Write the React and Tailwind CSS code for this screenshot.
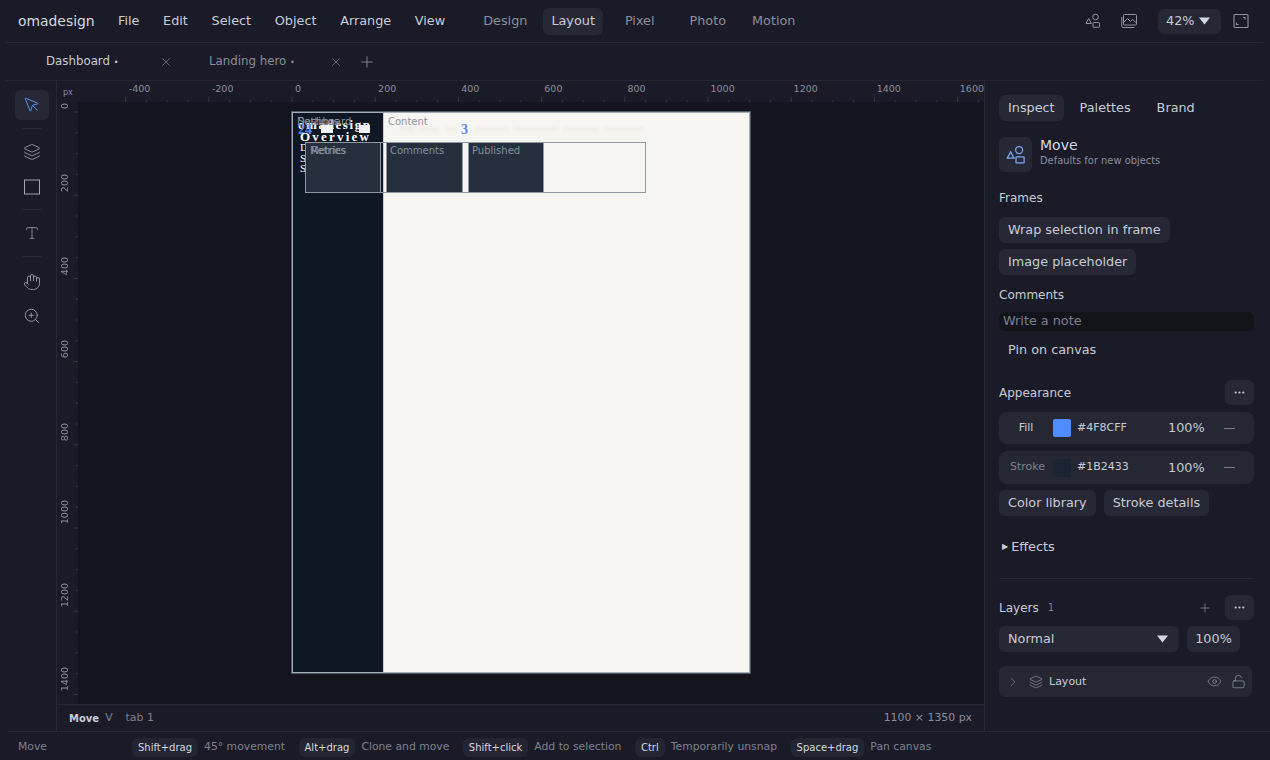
import React from 'react';
import { MousePointer, Layers, Type, Hand, ZoomIn, X, Plus, Ellipsis, ChevronRight, Eye, LockOpen } from 'lucide-react';

const menus = ['File', 'Edit', 'Select', 'Object', 'Arrange', 'View'];
const hints = [
  ['Shift+drag', '45° movement'],
  ['Alt+drag', 'Clone and move'],
  ['Shift+click', 'Add to selection'],
  ['Ctrl', 'Temporarily unsnap'],
  ['Space+drag', 'Pan canvas'],
];
const hLabels = [-400, -200, 0, 200, 400, 600, 800, 1000, 1200, 1400, 1600];
const vLabels = [0, 200, 400, 600, 800, 1000, 1200, 1400];
const cards = [
  { label: 'Comments', cls: 'w-[77px] ml-[5px]' },
  { label: 'Published', cls: 'w-[76px] ml-[5px]' },
];
const smudges = [
  'left-[107px] w-[15px]', 'left-[126px] w-[20px]', 'left-[152px] w-[12px]',
  'left-[182px] w-[34px]', 'left-[221px] w-[44px]', 'left-[270px] w-[36px]', 'left-[311px] w-[40px]',
];

const Caret = ({ className }) => (
  <svg width="11" height="8" viewBox="0 0 11 8" className={className}><path d="M0 0.5h11L5.5 7.5z" fill="currentColor" /></svg>
);

const Corner = () => (
  <svg width="16" height="16" viewBox="0 0 16 16" fill="none" stroke="#8f93a3" strokeWidth="1.1">
    <rect x="1" y="1.5" width="14" height="13" rx="1" />
    <path d="M10 4.5h2v2M3.5 9.5v2h2" />
  </svg>
);

// triangle, circle and box, used in the top bar and the Move header
const ShapesIcon = ({ size, color }) => (
  <svg width={size} height={size} viewBox="0 0 16 16" fill="none" stroke={color} strokeWidth="1">
    <path d="M3.7 5.5 6.4 10.5H1z" />
    <circle cx="10.5" cy="4" r="2.8" />
    <rect x="8" y="9.5" width="6.5" height="4.8" rx="0.6" />
  </svg>
);

const ImagesIcon = () => (
  <svg width="16" height="16" viewBox="0 0 16 16" fill="none" stroke="#8f93a3" strokeWidth="1">
    <rect x="2.5" y="1.5" width="13" height="10.5" rx="1" />
    <path d="M2.5 9.5 6.5 5.5 9.5 8.5 11.5 6.5 15.5 10M.8 4v9.5a1 1 0 0 0 1 1h11.5" />
  </svg>
);

function Chip({ children }) {
  return <button className="h-[26px] px-[9px] rounded-md bg-[#262835] text-[12.8px] text-[#c9ccd8] whitespace-nowrap">{children}</button>;
}

function ColorRow({ label, swatch, hex, dim, h }) {
  return (
    <div className={`flex items-center rounded-lg bg-[#252733] ${h}`}>
      <span className={`w-[54px] text-center ${dim ? 'text-[11px] text-[#7d8090] pl-[3px]' : 'text-[11px] text-[#c9ccd8]'}`}>{label}</span>
      <span className={`w-[18px] h-[18px] rounded-[2px] ${swatch}`} />
      <span className="ml-[6px] w-[91px] text-[11px] text-[#c9ccd8]">{hex}</span>
      <span className="w-[44px] text-[12.8px] text-[#c9ccd8]">100%</span>
      <span className="ml-[12px] w-[11px] h-px bg-[#7d8090]" />
    </div>
  );
}

function Rulers() {
  return (
    <>
      <div className="absolute left-0 top-0 right-0 h-[21px] overflow-hidden">
        <span className="absolute left-[6px] top-[6px] text-[8px] text-[#8a8d9c]">px</span>
        <svg className="absolute left-0 top-0" width="928" height="21">
          {Array.from({ length: 50 }, (_, i) => {
            const x = 235 - 8 * 20.8 + i * 20.8;
            return <line key={i} x1={x} x2={x} y1={i % 4 === 0 ? 16 : 19} y2="21" stroke="#33353f" strokeWidth="1" />;
          })}
        </svg>
        {hLabels.map(v => (
          <span key={v} className="absolute top-[1px] text-[9.5px] text-[#8a8d9c]" style={{ left: 235 + (v / 200) * 83.1 + 3 }}>{v}</span>
        ))}
      </div>
      <div className="absolute left-0 top-[21px] bottom-[27px] w-[21px] overflow-hidden">
        <svg className="absolute left-0 top-0" width="21" height="602">
          {Array.from({ length: 30 }, (_, i) => {
            const y = 10 + i * 20.8;
            return <line key={i} x1={i % 4 === 0 ? 16 : 19} x2="21" y1={y} y2={y} stroke="#33353f" strokeWidth="1" />;
          })}
        </svg>
        {vLabels.map(v => (
          <span key={v} className="absolute left-[2px] text-[9.5px] leading-[12px] text-[#8a8d9c] [writing-mode:vertical-rl] rotate-180" style={{ bottom: 602 - (10 + (v / 200) * 83.1) + 3 }}>{v}</span>
        ))}
      </div>
    </>
  );
}

function Artboard() {
  return (
    <div className="absolute left-[235px] top-[31px] w-[458px] h-[561px] border border-[#a3adb7] shadow-[0_0_0_1px_#4f5963] bg-[#f7f5f1] overflow-hidden">
      <div className="absolute left-0 top-0 w-[91px] h-full bg-[#0e1723] border-r border-[#c9ccd0]" />
      <span className="absolute left-[5px] top-[5px] w-[85px] overflow-hidden text-[13px] leading-[14px] font-bold text-white font-['Liberation_Serif',serif] tracking-[1.6px] whitespace-nowrap">omadesign</span>
      <span className="absolute left-[4px] top-[1px] text-[10px] text-[#8b93a3]">Dashboard</span>
      <span className="absolute left-[5px] top-[1px] text-[10px] text-[#8b93a3]">Settings</span>
      <span className="absolute left-[5px] top-[10px] text-[14px] leading-[14px] font-bold text-[#4f8cff] font-['Liberation_Serif',serif]">24</span>
      <span className="absolute left-[28px] top-[12px] w-[12px] h-[8px] bg-[#eef0f2]" />
      <span className="absolute left-[66px] top-[12px] w-[11px] h-[8px] bg-[#eef0f2]" />
      <span className="absolute left-[7px] top-[17px] text-[13px] leading-[14px] font-bold text-white font-['Liberation_Serif',serif] tracking-[2.2px]">Overview</span>
      <span className="absolute left-[7px] top-[27px] text-[11px] leading-[14px] text-white font-['Liberation_Serif',serif]">D</span>
      <span className="absolute left-[7px] top-[38px] text-[11px] leading-[14px] text-white font-['Liberation_Serif',serif]">S</span>
      <span className="absolute left-[7px] top-[48px] text-[11px] leading-[14px] text-white font-['Liberation_Serif',serif]">S</span>
      <span className="absolute left-[95px] top-[1px] text-[10px] text-[#8f94a0]">Content</span>
      {smudges.map(s => <div key={s} className={`absolute top-[14px] h-[4px] bg-[#f0eeea] blur-[1px] ${s}`} />)}
      <span className="absolute left-[168px] top-[10px] text-[14px] leading-[14px] font-bold text-[#4f8cff] font-['Liberation_Serif',serif]">3</span>
      <div className="absolute left-[12px] top-[29px] w-[341px] h-[51px] border border-[#8e99a6] flex">
        <div className="relative h-full w-[75px] bg-[#252f3e] border-r border-[#8e99a6] text-[10px] leading-[16px] text-[#87909c]">
          <span className="absolute left-[4px]">Metrics</span>
          <span className="absolute left-[5px]">Retries</span>
        </div>
        {cards.map(c => (
          <div key={c.label} className={`h-full bg-[#252f3e] border-x border-[#8e99a6] pl-[3px] text-[10px] leading-[16px] text-[#87909c] ${c.cls}`}>{c.label}</div>
        ))}
      </div>
    </div>
  );
}

export default function App() {
  return (
    <div className="w-[1270px] h-[760px] overflow-hidden flex flex-col bg-[#1a1b27] text-[#c9ccd8] font-['DejaVu_Sans',sans-serif]">
      <header className="h-[43px] shrink-0 flex items-center ml-[6px] mr-[7px] pl-[12px] pr-[14px] border-b border-[#262835]">
        <span className="text-[13.9px] text-[#d5d8e3] w-[100px]">omadesign</span>
        <nav className="flex gap-[23.7px] text-[12.8px] text-[#c9ccd8]">
          {menus.map(m => <span key={m}>{m}</span>)}
        </nav>
        <div className="ml-[30px] flex items-center text-[12.8px] text-[#8a8d9c]">
          <span className="px-2">Design</span>
          <span className="ml-2 h-[27px] px-2 flex items-center rounded-md bg-[#262835] text-[#c9ccd8]">Layout</span>
          <span className="ml-[14px] px-2">Pixel</span>
          <span className="ml-[19px] px-2">Photo</span>
          <span className="ml-[10px] px-2">Motion</span>
        </div>
        <div className="ml-auto flex items-center">
          <ShapesIcon size={16} color="#8f93a3" />
          <span className="ml-[20px]"><ImagesIcon /></span>
          <div className="ml-[21px] w-[63px] h-[25px] rounded-md bg-[#262835] flex items-center pl-[8px] gap-[5px] text-[12.8px]">42%<Caret className="text-[#d5d8e3]" /></div>
          <span className="ml-[12px]"><Corner /></span>
        </div>
      </header>

      <div className="h-[38px] shrink-0 flex items-center ml-[6px] mr-[7px] pl-[40px] border-b border-[#232530] text-[11.8px]">
        <span className="w-[113px] text-[#c9ccd8]">Dashboard <span className="text-[8px]">•</span></span>
        <X size={14} strokeWidth={1} className="text-[#9a9dac]" />
        <span className="ml-[36px] w-[120px] text-[#8a8d9c]">Landing hero <span className="text-[8px]">•</span></span>
        <X size={14} strokeWidth={1} className="text-[#9a9dac]" />
        <Plus size={18} strokeWidth={1} className="ml-[15px] text-[#9a9dac]" />
      </div>

      <div className="flex-1 flex min-h-0">
        <aside className="w-[57px] shrink-0 flex flex-col items-center pt-[9px] pl-[7px] border-r border-[#262835] text-[#a3a6b4]">
          <div className="w-[34px] h-[30px] shrink-0 rounded-md bg-[#262835] flex items-center justify-center">
            <MousePointer size={18} strokeWidth={1.3} className="text-[#5b93f0]" />
          </div>
          <span className="mt-[8px] w-[18px] h-px bg-[#2b2d3a]" />
          <Layers size={18} strokeWidth={1.1} className="mt-[14px]" />
          <svg width="18" height="16" viewBox="0 0 18 16" fill="none" stroke="currentColor" strokeWidth="1" className="mt-[18px]"><rect x="1.5" y="1" width="15" height="14" /></svg>
          <span className="mt-[14px] w-[18px] h-px bg-[#2b2d3a]" />
          <Type size={16} strokeWidth={1.1} className="mt-[15px]" />
          <span className="mt-[15px] w-[18px] h-px bg-[#2b2d3a]" />
          <Hand size={18} strokeWidth={1.1} className="mt-[16px]" />
          <ZoomIn size={18} strokeWidth={1.1} className="mt-[16px]" />
        </aside>

        <main className="relative w-[928px] shrink-0 bg-[#13141d] border-r border-[#262835]">
          <div className="absolute left-0 right-0 top-0 h-[21px] bg-[#1a1b27]" />
          <div className="absolute left-0 top-0 bottom-0 w-[21px] bg-[#1a1b27]" />
          <Rulers />
          <Artboard />
          <div className="absolute left-0 right-0 bottom-0 h-[27px] bg-[#1a1b27] border-t border-[#262835] flex items-center px-[12px] text-[10.9px]">
            <span className="font-bold text-[10px] text-[#c9ccd8]">Move</span>
            <span className="ml-[6px] text-[#7d8090]">V</span>
            <span className="ml-[13px] text-[#7d8090]">tab 1</span>
            <span className="ml-auto text-[#8a8d9c]">1100 × 1350 px</span>
          </div>
        </main>

        <aside className="flex-1 pl-[14px] pr-[16px] pt-[14px] min-w-0">
          <div className="flex items-center text-[12.8px] h-[26px]">
            <span className="h-[26px] px-[9px] flex items-center rounded-md bg-[#262835]">Inspect</span>
            <span className="ml-[16px]">Palettes</span>
            <span className="ml-[26px]">Brand</span>
          </div>
          <div className="mt-[16px] flex items-center h-[35px]">
            <div className="w-[33px] h-[35px] rounded-md bg-[#262835] flex items-center justify-center">
              <ShapesIcon size={20} color="#7ea6f0" />
            </div>
            <div className="ml-[8px] -mt-[4px]">
              <div className="text-[14px] leading-[16px] text-[#d5d8e3]">Move</div>
              <div className="text-[9.9px] leading-[15px] text-[#8a8d9c]">Defaults for new objects</div>
            </div>
          </div>

          <div className="mt-[18px] text-[12px] leading-[16px]">Frames</div>
          <div className="mt-[11px] flex flex-col items-start gap-[6px]">
            <Chip>Wrap selection in frame</Chip>
            <Chip>Image placeholder</Chip>
          </div>
          <div className="mt-[12px] text-[12px] leading-[16px]">Comments</div>
          <div className="mt-[9px] h-[19px] rounded-md bg-[#12131b] pl-[4px] text-[12.8px] leading-[18px] text-[#7d8090]">Write a note</div>
          <div className="mt-[10px] pl-[9px] text-[12.8px] leading-[18px]">Pin on canvas</div>

          <div className="mt-[21px] flex items-center justify-between h-[25px]">
            <span className="text-[12px]">Appearance</span>
            <span className="w-[29px] h-[25px] rounded-md bg-[#262835] flex items-center justify-center"><Ellipsis size={13} /></span>
          </div>
          <div className="mt-[7px] flex flex-col gap-[7px]">
            <ColorRow label="Fill" swatch="bg-[#4f8cff]" hex="#4F8CFF" h="h-[32px]" />
            <ColorRow label="Stroke" swatch="bg-[#1b2433]" hex="#1B2433" dim h="h-[33px]" />
          </div>
          <div className="mt-[6px] flex gap-2">
            <Chip>Color library</Chip>
            <Chip>Stroke details</Chip>
          </div>
          <div className="mt-[22px] pl-[3px] flex items-center gap-[3px] text-[12.8px] leading-[18px]"><span className="text-[8px]">▶</span>Effects</div>
          <div className="mt-[22px] h-px bg-[#262835]" />

          <div className="mt-[16px] flex items-center h-[25px]">
            <span className="text-[12px]">Layers</span>
            <span className="ml-[9px] text-[10px] text-[#7d8090]">1</span>
            <Plus size={14} strokeWidth={1} className="ml-auto mr-[13px] text-[#a3a6b4]" />
            <span className="w-[29px] h-[25px] rounded-md bg-[#262835] flex items-center justify-center"><Ellipsis size={13} /></span>
          </div>
          <div className="mt-[6px] flex gap-2">
            <div className="w-[180px] h-[26px] rounded-md bg-[#262835] flex items-center justify-between pl-[9px] pr-[11px] text-[12.8px]">Normal<Caret className="text-[#d5d8e3]" /></div>
            <div className="w-[53px] h-[26px] rounded-md bg-[#262835] flex items-center justify-center text-[12.8px]">100%</div>
          </div>
          <div className="mt-[14px] w-[253px] h-[31px] rounded-md bg-[#252733] flex items-center pl-[7px] pr-[6px] text-[11px]">
            <ChevronRight size={14} strokeWidth={1} className="text-[#a3a6b4]" />
            <Layers size={14} strokeWidth={1} className="ml-[9px] text-[#a3a6b4]" />
            <span className="ml-[6px] pt-px">Layout</span>
            <Eye size={15} strokeWidth={1} className="ml-auto text-[#a3a6b4]" />
            <LockOpen size={15} strokeWidth={1} className="ml-[9px] text-[#a3a6b4]" />
          </div>
        </aside>
      </div>

      <footer className="h-[29px] shrink-0 flex items-center ml-[8px] pl-[10px] pt-[3px] border-t border-[#262835] text-[10.8px]">
        <span className="w-[114px] text-[#7d8090]">Move</span>
        <div className="flex items-center gap-[13.5px]">
          {hints.map(([k, d]) => (
            <div key={k} className="flex items-center gap-[6px]">
              <span className="h-[19px] px-[6px] flex items-center rounded-md bg-[#232530] text-[#d5d8e3] text-[10px]">{k}</span>
              <span className="text-[#7d8090]">{d}</span>
            </div>
          ))}
        </div>
      </footer>
    </div>
  );
}
